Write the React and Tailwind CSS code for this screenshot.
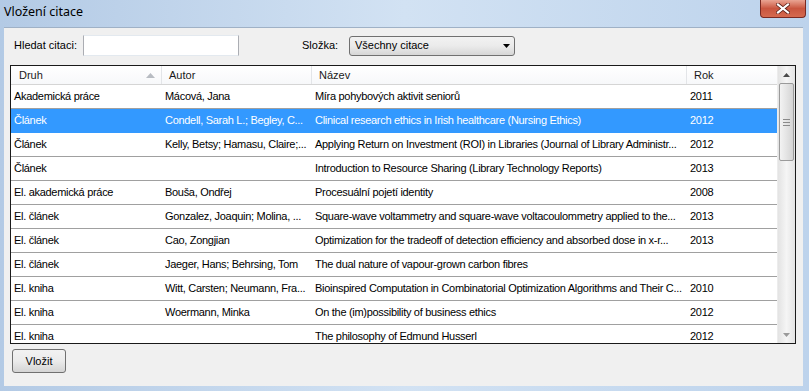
import React from 'react';

const rows = [
    { druh: 'Akademická práce', autor: 'Mácová, Jana', nazev: 'Míra pohybových aktivit seniorů', rok: '2011' },
    { druh: 'Článek', autor: 'Condell, Sarah L.; Begley, C...', nazev: 'Clinical research ethics in Irish healthcare (Nursing Ethics)', rok: '2012', selected: true },
    { druh: 'Článek', autor: 'Kelly, Betsy; Hamasu, Claire;...', nazev: 'Applying Return on Investment (ROI) in Libraries (Journal of Library Administr...', rok: '2012' },
    { druh: 'Článek', autor: '', nazev: 'Introduction to Resource Sharing (Library Technology Reports)', rok: '2013' },
    { druh: 'El. akademická práce', autor: 'Bouša, Ondřej', nazev: 'Procesuální pojetí identity', rok: '2008' },
    { druh: 'El. článek', autor: 'Gonzalez, Joaquin; Molina, ...', nazev: 'Square-wave voltammetry and square-wave voltacoulommetry applied to the...', rok: '2013' },
    { druh: 'El. článek', autor: 'Cao, Zongjian', nazev: 'Optimization for the tradeoff of detection efficiency and absorbed dose in x-r...', rok: '2013' },
    { druh: 'El. článek', autor: 'Jaeger, Hans; Behrsing, Tom', nazev: 'The dual nature of vapour-grown carbon fibres', rok: '' },
    { druh: 'El. kniha', autor: 'Witt, Carsten; Neumann, Fra...', nazev: 'Bioinspired Computation in Combinatorial Optimization Algorithms and Their C...', rok: '2010' },
    { druh: 'El. kniha', autor: 'Woermann, Minka', nazev: 'On the (im)possibility of business ethics', rok: '2012' },
    { druh: 'El. kniha', autor: '', nazev: 'The philosophy of Edmund Husserl', rok: '2012' },
];

const Cell = ({ w, children }) => (
    <div className={`${w} shrink-0 pl-[3px] overflow-hidden whitespace-nowrap tracking-[-0.3px]`}>{children}</div>
);

const App = () => {
    return (
        <div
            className="w-[809px] h-[391px] flex flex-col bg-gradient-to-r from-[#b3cae5] via-[#d2e2f3] to-[#bdd3ec] text-[11px] text-black"
            style={{ fontFamily: '"Liberation Sans", Arial, sans-serif' }}
        >
            {/* --- TITLE BAR --- */}
            <div className="h-[27px] shrink-0 flex items-start justify-between">
                <div className="pl-[4px] pt-[3px] text-[12.5px] text-black" style={{ fontFamily: '"Noto Sans", "Open Sans", sans-serif' }}>
                    Vložení citace
                </div>
                <div className="mr-[3px] w-[46px] h-[18px] rounded-b-[4px] border border-t-0 border-[#7a2a22] bg-gradient-to-b from-[#e9a493] via-[#c9553f] to-[#d56a4f] flex items-center justify-center">
                    <svg width="14" height="11" viewBox="0 0 14 11">
                        <path d="M2 1.5 L12 9.5 M12 1.5 L2 9.5" stroke="#5a1e16" strokeWidth="3.6" strokeLinecap="square" />
                        <path d="M2 1.5 L12 9.5 M12 1.5 L2 9.5" stroke="#ffffff" strokeWidth="2.2" strokeLinecap="square" />
                    </svg>
                </div>
            </div>

            {/* --- CLIENT AREA --- */}
            <div className="ml-[4px] mr-[6px] mb-[5px] flex-1 bg-[#f0f0f0] border-t border-[#9fb1c6] flex flex-col">
                {/* search row */}
                <div className="mt-[7px] h-[21px] flex items-center">
                    <div className="pl-[10px] w-[79px] shrink-0">Hledat citaci:</div>
                    <div className="w-[156px] h-[21px] bg-white border border-[#abadb3] border-t-[#e3e9ef] border-b-[#e3e9ef]" />
                    <div className="ml-[63px] w-[47px] shrink-0">Složka:</div>
                    <div className="w-[166px] h-[20px] rounded-[3px] border border-[#707070] bg-gradient-to-b from-[#f2f2f2] via-[#ebebeb] to-[#d6d6d6] flex items-center justify-between pl-[5px] pr-[4px]">
                        <span>Všechny citace</span>
                        <svg width="7" height="4" viewBox="0 0 7 4"><path d="M0 0 H7 L3.5 4 Z" fill="#000" /></svg>
                    </div>
                </div>

                {/* --- LIST VIEW --- */}
                <div className="ml-[6px] mt-[9px] w-[786px] h-[279px] border border-[#1a1a1a] bg-white flex overflow-hidden">
                    <div className="w-[766px] shrink-0 flex flex-col">
                        <div className="h-[19px] shrink-0 flex items-center border-b border-[#d5d5d5] bg-gradient-to-b from-white to-[#f7f8fa] text-[#1a1a1a]">
                            <div className="w-[151px] h-full shrink-0 flex items-center justify-between pl-[8px] pr-[6px] border-r border-[#e3e5e8]">
                                <span>Druh</span>
                                <svg width="9" height="5" viewBox="0 0 9 5"><path d="M0 5 L4.5 0 L9 5 Z" fill="#b8bcc2" /></svg>
                            </div>
                            <div className="w-[150px] h-full shrink-0 flex items-center pl-[7px] border-r border-[#e3e5e8]">Autor</div>
                            <div className="w-[375px] h-full shrink-0 flex items-center pl-[7px] border-r border-[#e3e5e8]">Název</div>
                            <div className="w-[90px] h-full shrink-0 flex items-center pl-[7px]">Rok</div>
                        </div>
                        {rows.map((r, i) => (
                            <div
                                key={i}
                                className={`h-[24px] shrink-0 flex items-center border-b ${r.selected ? 'bg-[#3399ff] border-[#3399ff] text-white' : 'border-[#a0a0a0]'}`}
                            >
                                <Cell w="w-[151px]">{r.druh}</Cell>
                                <Cell w="w-[150px]">{r.autor}</Cell>
                                <Cell w="w-[375px]">{r.nazev}</Cell>
                                <Cell w="w-[90px]">{r.rok}</Cell>
                            </div>
                        ))}
                    </div>

                    {/* scrollbar */}
                    <div className="w-[18px] shrink-0 flex flex-col bg-gradient-to-r from-[#e3e3e3] via-[#f5f5f5] to-[#e3e3e3] border-l border-[#ececec]">
                        <div className="h-[17px] shrink-0 flex items-center justify-center">
                            <svg width="7" height="4" viewBox="0 0 7 4"><path d="M0 4 L3.5 0 L7 4 Z" fill="#4a4a4a" /></svg>
                        </div>
                        <div className="mx-[1px] h-[78px] shrink-0 rounded-[2px] border border-[#9a9a9a] bg-gradient-to-r from-[#f3f3f3] via-[#e4e4e4] to-[#d4d4d4] flex flex-col items-center justify-center gap-[2px]">
                            <div className="w-[7px] h-[1px] bg-[#8a8a8a]" />
                            <div className="w-[7px] h-[1px] bg-[#8a8a8a]" />
                            <div className="w-[7px] h-[1px] bg-[#8a8a8a]" />
                        </div>
                        <div className="flex-1" />
                        <div className="h-[17px] shrink-0 flex items-center justify-center">
                            <svg width="7" height="4" viewBox="0 0 7 4"><path d="M0 0 H7 L3.5 4 Z" fill="#9a9a9a" /></svg>
                        </div>
                    </div>
                </div>

                {/* --- FOOTER BUTTON --- */}
                <div className="ml-[8px] mt-[5px] w-[54px] h-[24px] rounded-[3px] border border-[#707070] bg-gradient-to-b from-[#f2f2f2] via-[#ebebeb] to-[#d4d4d4] flex items-center justify-center">
                    Vložit
                </div>
            </div>
        </div>
    );
};

export default App;
